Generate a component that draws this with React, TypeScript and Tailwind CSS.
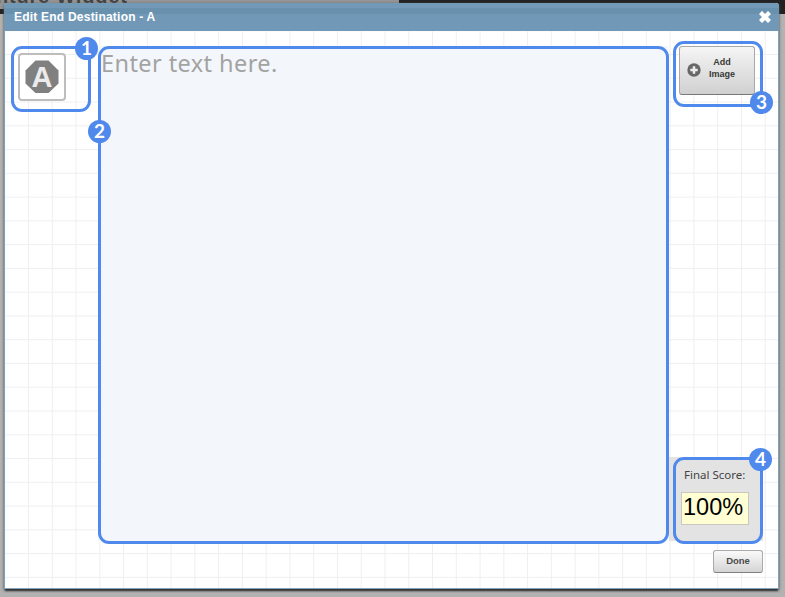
import type { ReactNode } from "react";

function Badge({ n, className }: { n: number; className: string }) {
  return (
    <span
      className={`absolute z-20 flex size-[23px] items-center justify-center rounded-full bg-[#5089ec] pb-[3px] font-['Lato',sans-serif] text-[19px] font-bold leading-none text-white ${className}`}
    >
      {n}
    </span>
  );
}

function Callout({ n, badge, className, children }: { n: number; badge: string; className: string; children: ReactNode }) {
  return (
    <section className={`relative rounded-[11px] border-3 border-[#5089ec] ${className}`}>
      {children}
      <Badge n={n} className={badge} />
    </section>
  );
}

function DestinationIcon() {
  return (
    <div className="ml-[4px] mt-[4px] flex size-[48px] items-center justify-center rounded-[4px] border-2 border-[#bdbdbd] bg-white">
      <svg viewBox="0 0 34 34" className="size-[34px]">
        <path d="M10.5 .5h13L33.5 10.5v13L23.5 33h-13L.5 23.5v-13z" fill="#808080" />
        <text x="17" y="27" textAnchor="middle" fontFamily="Liberation Sans, sans-serif" fontWeight="bold" fontSize="29" fill="#ececec">
          A
        </text>
      </svg>
    </div>
  );
}

function Backdrop() {
  return (
    <div className="absolute inset-x-0 top-0 h-[42px] bg-[#b2b2b2]">
      <div className="absolute inset-x-0 top-0 h-[14px] bg-[#949494]" />
      <div className="absolute -top-[16px] left-[-4px] whitespace-nowrap font-['Liberation_Sans',sans-serif] text-[20px] font-bold leading-[24px] tracking-[0.8px] text-[#444]">
        nture Widget
      </div>
      <div className="absolute left-0 top-[9px] h-[5px] w-[5px] bg-[#222]" />
      <div className="absolute left-[399px] right-0 top-0 h-[14px] bg-[#222]" />
    </div>
  );
}

export default function App() {
  return (
    <main className="relative h-[597px] w-[785px] overflow-hidden bg-[#b2b2b2] pl-[4px] pt-[3px] font-['Liberation_Sans',sans-serif]">
      <Backdrop />
      <div className="relative flex h-[586px] w-[775px] flex-col rounded-t-[3px] border-x border-b border-[#7fa3bb] bg-white shadow-[0_3px_2px_-1px_#333,0_1px_3px_0_#555]">
        <header className="-mx-px flex h-[28px] shrink-0 items-center justify-between rounded-t-[3px] bg-[linear-gradient(#729ab7_0_5px,#6891ad_5px_11px,#7199b7_11px)] pl-[10px] pr-[8px]">
          <h1 className="whitespace-nowrap text-[12px] font-bold leading-[14px] tracking-[0.22px] text-white">Edit End Destination - A</h1>
          <svg viewBox="0 0 12 12" className="size-[12px]">
            <path d="M3 3l6 6M9 3l-6 6" stroke="white" strokeWidth="4.3" strokeLinecap="square" />
          </svg>
        </header>
        <div className="flex flex-1 flex-col bg-[linear-gradient(90deg,#efefef_1px,transparent_1px),linear-gradient(#efefef_1px,transparent_1px)] bg-[size:23.77px_23.77px] bg-position-[23px_23px]">
          <div className="flex h-[513px] items-start">
            <Callout n={1} badge="left-[61px] -top-[12px]" className="ml-[6px] mt-[15px] h-[66px] w-[80px]">
              <DestinationIcon />
            </Callout>
            <div className="ml-[7px] mt-[15px] h-[497px] w-[571px] bg-[linear-gradient(#f3f7fb,#f3f7fb)] bg-[size:570px_495px] bg-no-repeat">
              <Callout n={2} badge="-left-[13px] top-[71px]" className="h-[498px] w-[571px]">
                <p className="whitespace-nowrap font-['Noto_Sans',sans-serif] text-[23.5px] leading-[28px] tracking-[0.42px] text-[#a3a3a3]">
                  Enter text here.
                </p>
              </Callout>
            </div>
            <aside className="flex h-full w-[94px] flex-col justify-between pt-[10px]">
              <Callout n={3} badge="left-[74px] top-[47px]" className="ml-[4px] h-[66px] w-[90px]">
                <button className="ml-[3px] mt-[2px] flex h-[49px] w-[76px] items-center rounded-[3px] border border-[#a9a9a9] border-b-[#777] bg-[linear-gradient(#f5f5f5,#d0d0d0)] pl-[7px]">
                  <svg viewBox="0 0 14 14" className="mb-px size-[14px]">
                    <circle cx="7" cy="7" r="6.7" fill="#686868" />
                    <path d="M7 3.3v7.4M3.3 7h7.4" stroke="#eee" strokeWidth="2.5" />
                  </svg>
                  <span className="mb-[6px] ml-[7px] w-[28px] text-center text-[9px] font-bold leading-[12px] text-[#383838]">
                    Add
                    <br />
                    Image
                  </span>
                </button>
              </Callout>
              <div className="bg-[linear-gradient(#e3e3e3,#e3e3e3)] bg-[size:94px_84px] bg-no-repeat pl-[4px]">
                <Callout n={4} badge="left-[73px] -top-[12px]" className="h-[87px] w-[90px]">
                  <div className="ml-[8px] mt-[7px] whitespace-nowrap font-['Noto_Sans',sans-serif] text-[11.5px] leading-[16px] text-[#444]">
                    Final Score:
                  </div>
                  <div className="ml-[5px] mt-[9px] flex h-[33px] w-[68px] items-center border border-[#c8c8c0] bg-[#ffffd3] pb-[2px] pl-px text-[23.5px] leading-none text-black">
                    100%
                  </div>
                </Callout>
              </div>
            </aside>
          </div>
          <button className="ml-[708px] mt-[6px] h-[23px] w-[50px] rounded-[3px] border border-[#aaa] border-b-[#808080] bg-[linear-gradient(#fafafa,#d4d4d4)] pb-[2px] text-[9.5px] font-bold leading-none text-[#4a4a4a]">
            Done
          </button>
        </div>
      </div>
    </main>
  );
}
